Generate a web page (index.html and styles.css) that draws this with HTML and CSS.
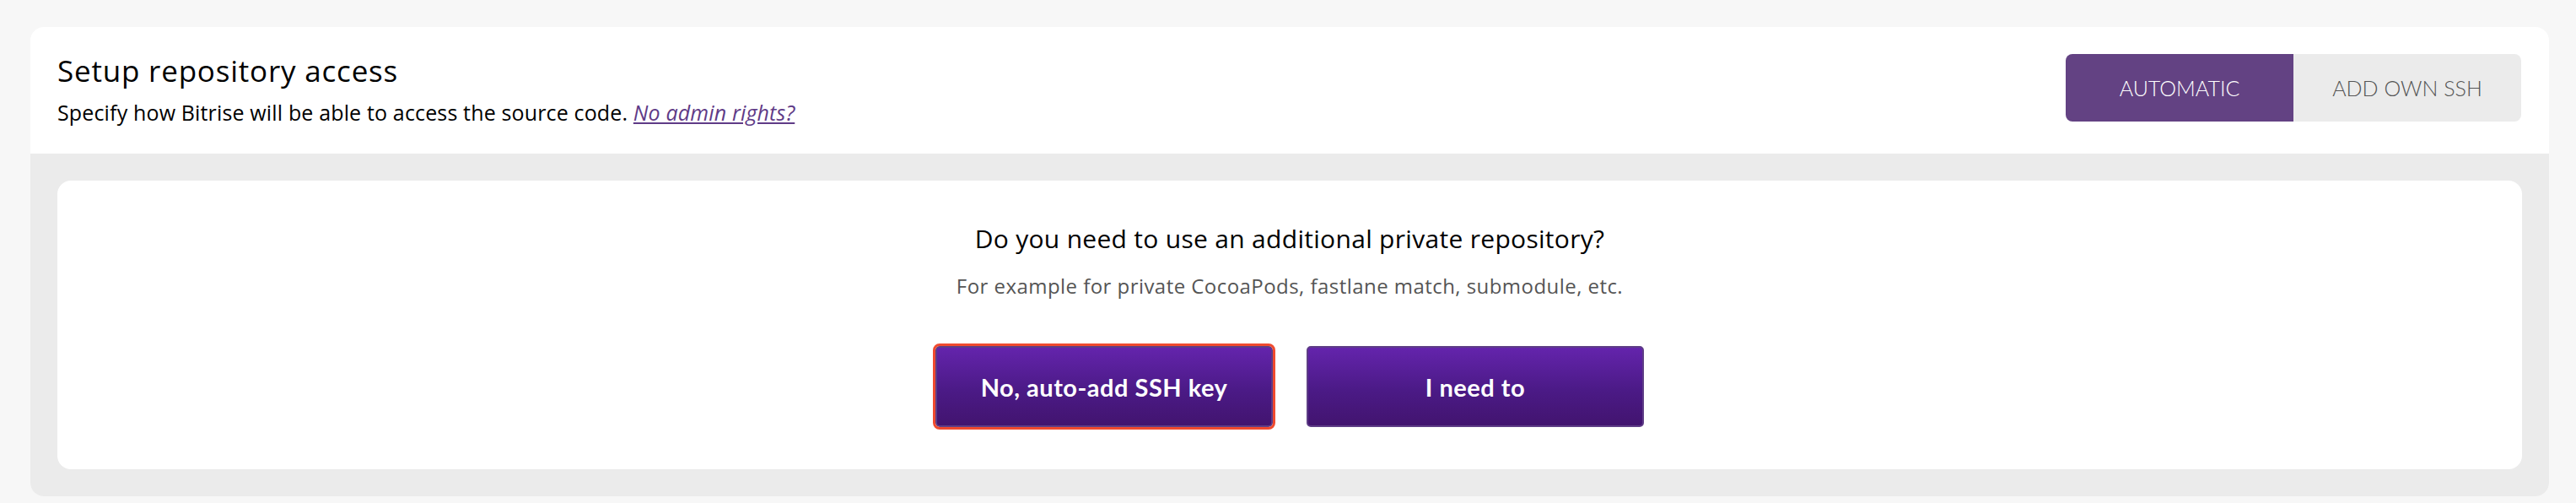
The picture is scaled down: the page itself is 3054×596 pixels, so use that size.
FILE: index.html
```html
<!DOCTYPE html>
<html lang="en">
<head>
<meta charset="utf-8">
<title>Setup repository access</title>
<link rel="stylesheet" href="styles.css">
</head>
<body>
  <section class="card">
    <header class="card-header">
      <div class="heading">
        <h1 class="title">Setup repository access</h1>
        <p class="subtitle">Specify how Bitrise will be able to access the source code. <a class="link" href="#">No admin rights?</a></p>
      </div>
      <div class="toggle">
        <button class="toggle-btn is-active">AUTOMATIC</button>
        <button class="toggle-btn">ADD OWN SSH</button>
      </div>
    </header>
    <div class="card-body">
      <div class="panel">
        <h2 class="question">Do you need to use an additional private repository?</h2>
        <p class="hint">For example for private CocoaPods, fastlane match, submodule, etc.</p>
        <div class="actions">
          <button class="action is-focused">No, auto-add SSH key</button>
          <button class="action">I need to</button>
        </div>
      </div>
    </div>
  </section>
</body>
</html>
```
FILE: styles.css
```css
* { box-sizing: border-box; }

html, body { margin: 0; }

body {
  background: #f7f7f7;
  padding: 32px 32px 8px 36px;
  font-family: "Open Sans", Lato, "Liberation Sans", sans-serif;
  color: #111;
}

.card {
  background: #ffffff;
  border-radius: 16px;
  overflow: hidden;
}

.card-header {
  display: flex;
  justify-content: space-between;
  align-items: flex-start;
  height: 150px;
  padding: 32px 33px 0 32px;
}

.title {
  margin: 0;
  font-size: 35px;
  line-height: 40px;
  font-weight: 400;
  color: #000;
  letter-spacing: 0.8px;
}

.subtitle {
  margin: 15px 0 0;
  font-size: 25px;
  line-height: 28px;
  color: #000;
  letter-spacing: 0.15px;
}

.link {
  color: #5f3b87;
  font-style: italic;
  text-decoration: underline;
}

.toggle {
  display: flex;
  border-radius: 8px;
  overflow: hidden;
  height: 80px;
}

.toggle-btn {
  width: 270px;
  border: 0;
  margin: 0;
  background: #ebebeb;
  color: #555555;
  font-family: Lato, "Open Sans", sans-serif;
  font-weight: 300;
  font-size: 25px;
  cursor: pointer;
}

.toggle-btn.is-active {
  background: #634283;
  color: #ffffff;
}

.card-body {
  background: #ebebeb;
  padding: 32px;
}

.panel {
  background: #ffffff;
  border-radius: 16px;
  padding: 51px 32px 50px;
  display: flex;
  flex-direction: column;
  align-items: center;
}

.question {
  margin: 0;
  font-size: 30px;
  line-height: 36px;
  font-weight: 400;
  color: #000;
  letter-spacing: 0.3px;
}

.hint {
  margin: 23px 0 0;
  font-size: 24px;
  line-height: 30px;
  color: #555555;
  letter-spacing: 0.45px;
}

.actions {
  display: flex;
  gap: 40px;
  margin-top: 56px;
}

.action {
  width: 400px;
  height: 96px;
  border: 2px solid #5e3d86;
  border-radius: 5px;
  background: linear-gradient(180deg, #6424ac 0%, #4b1a86 55%, #42146f 100%);
  color: #ffffff;
  font-family: Lato, "Open Sans", sans-serif;
  font-weight: 700;
  font-size: 29px;
  letter-spacing: 0.5px;
  cursor: pointer;
}

.action.is-focused {
  outline: 3px solid #f04a2f;
  outline-offset: 0;
}
```
